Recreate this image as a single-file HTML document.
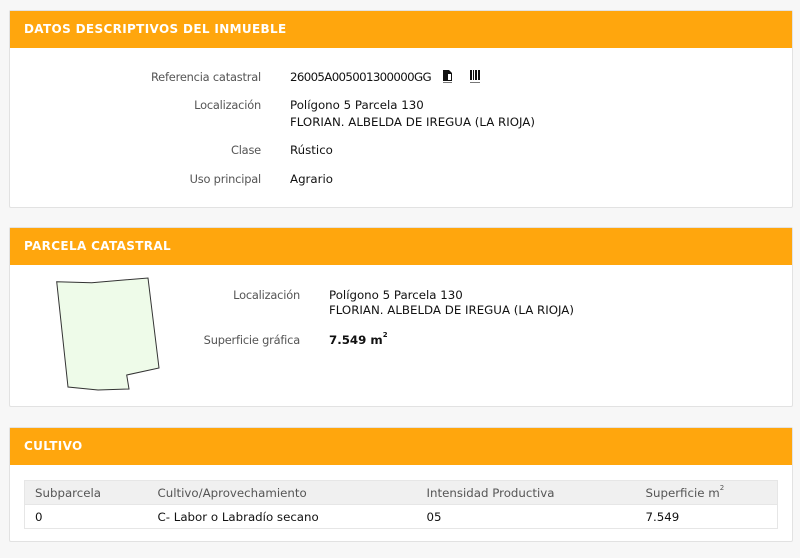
<!DOCTYPE html>
<html><head><meta charset="utf-8"><style>
*{margin:0;padding:0;box-sizing:border-box}
body{width:800px;height:558px;background:#f7f7f7;font-family:"DejaVu Sans","Liberation Sans",sans-serif;font-size:11.8px;color:#111;position:relative;overflow:hidden}
.panel{position:absolute;left:9px;width:784px;background:#fff;border:1px solid #e2e2e2;border-radius:2px}
.hd{background:#ffa60d;height:37px;color:#fff;font-weight:bold;font-size:12px;padding:11px 0 0 14px;letter-spacing:0.35px}
.t{position:absolute;white-space:nowrap}
.l{color:#555;text-align:right;font-size:11.4px;letter-spacing:-0.2px}
sup{font-size:7px;vertical-align:top;position:relative;top:-2px}
table{position:absolute;left:14px;top:52px;width:754px;border-collapse:collapse;border:1px solid #e6e6e6}
td{height:24px;padding-left:10px;border-bottom:1px solid #e6e6e6}
tr.h td{background:#f0f0f0;color:#555}
</style></head><body>
<div class="panel" style="top:10px;height:198px">
<div class="hd">DATOS DESCRIPTIVOS DEL INMUEBLE</div>
<div class="t l" style="right:531px;top:59px">Referencia catastral</div>
<div class="t" style="left:280px;top:59px;letter-spacing:-0.65px">26005A005001300000GG</div>
<svg class="t" style="left:431px;top:58px" width="14" height="14" viewBox="0 0 14 14"><path d="M2 1h6l3 3v8H2z" fill="#111"/><path d="M7 5h3v6H7z" fill="#fff"/><rect x="2" y="13" width="9" height="1" fill="#777"/></svg>
<svg class="t" style="left:459px;top:59px" width="12" height="14" viewBox="0 0 12 14"><rect x="1" y="0" width="2" height="10" fill="#111"/><rect x="4" y="0" width="1" height="10" fill="#111"/><rect x="6" y="0" width="2" height="10" fill="#111"/><rect x="9" y="0" width="2" height="10" fill="#111"/><rect x="1" y="12" width="10" height="1" fill="#777"/></svg>
<div class="t l" style="right:531px;top:87px">Localización</div>
<div class="t" style="left:280px;top:87px">Polígono 5 Parcela 130</div>
<div class="t" style="left:280px;top:104px">FLORIAN. ALBELDA DE IREGUA (LA RIOJA)</div>
<div class="t l" style="right:531px;top:132px">Clase</div>
<div class="t" style="left:280px;top:132px">Rústico</div>
<div class="t l" style="right:531px;top:161px">Uso principal</div>
<div class="t" style="left:280px;top:161px">Agrario</div>
</div>
<div class="panel" style="top:227px;height:180px">
<div class="hd">PARCELA CATASTRAL</div>
<div class="t l" style="right:492px;top:60px">Localización</div>
<div class="t" style="left:319px;top:60px">Polígono 5 Parcela 130</div>
<div class="t" style="left:319px;top:75px">FLORIAN. ALBELDA DE IREGUA (LA RIOJA)</div>
<div class="t l" style="right:492px;top:105px">Superficie gráfica</div>
<div class="t" style="left:319px;top:105px;font-weight:bold">7.549 m<sup>2</sup></div>
</div>
<svg style="position:absolute;left:0;top:0" width="800" height="558"><polygon points="56.7,281.7 91.7,282.7 148,278 159,368 126.7,375 129,389 98,390 68,387" fill="#eefbe9" stroke="#333" stroke-width="1"/></svg>
<div class="panel" style="top:427px;height:115px">
<div class="hd">CULTIVO</div>
<table>
<tr class="h"><td style="width:123px">Subparcela</td><td style="width:269px">Cultivo/Aprovechamiento</td><td style="width:219px">Intensidad Productiva</td><td>Superficie m<sup>2</sup></td></tr>
<tr><td>0</td><td>C- Labor o Labradío secano</td><td>05</td><td>7.549</td></tr>
</table>
</div>
</body></html>
